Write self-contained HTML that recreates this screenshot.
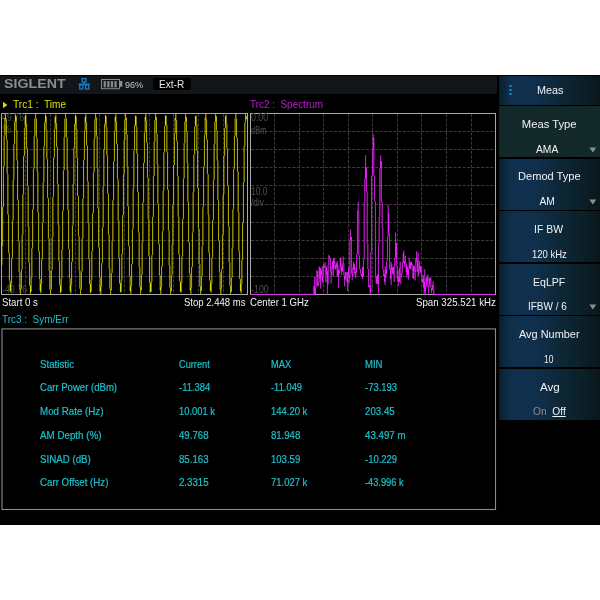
<!DOCTYPE html>
<html><head><meta charset="utf-8"><style>
html,body{margin:0;padding:0;}
body{width:600px;height:600px;background:#fff;position:relative;overflow:hidden;font-family:"Liberation Sans", sans-serif;}
.t{position:absolute;white-space:pre;}
</style></head><body>
<div style="position:absolute;left:0px;top:75px;width:600px;height:450px;background:#000"></div>
<div style="position:absolute;left:0px;top:76px;width:497px;height:18px;background:#121519"></div>
<svg style="position:absolute;left:0;top:70px;will-change:transform" width="80" height="25"><text x="4.1" y="18.3" font-family="Liberation Sans" font-weight="bold" font-size="12.9" fill="#8c8c8c" textLength="61.6" lengthAdjust="spacingAndGlyphs">SIGLENT</text></svg>
<svg style="position:absolute;left:78px;top:77px" width="13" height="14" viewBox="0 0 13 14">
<g fill="none" stroke="#127ec8" stroke-width="1.35">
<rect x="4.1" y="1.6" width="3.9" height="3.4"/>
<rect x="1.7" y="7.9" width="3.2" height="4.1"/>
<rect x="7.6" y="7.9" width="3.2" height="4.1"/>
<path d="M6.05 5V7.2M0.5 7.2H11.8"/>
</g></svg>
<svg style="position:absolute;left:100px;top:78px" width="24" height="12" viewBox="0 0 24 12">
<rect x="1.5" y="1.5" width="18" height="9.2" fill="none" stroke="#888" stroke-width="1"/>
<rect x="19.3" y="3" width="3" height="5.8" fill="#8e8e8e"/>
<rect x="3.6" y="3.1" width="2.3" height="6.3" fill="#858585"/>
<rect x="7.2" y="3.1" width="2.3" height="6.3" fill="#858585"/>
<rect x="10.8" y="3.1" width="2.3" height="6.3" fill="#858585"/>
<rect x="14.4" y="3.1" width="2.3" height="6.3" fill="#858585"/>
</svg>
<div class="t" style="left:125.00px;top:79.94px;font-size:9.4px;line-height:9.4px;color:#c4c4c4;font-weight:normal;transform:scaleX(0.9632);transform-origin:left 0;">96%</div>
<div style="position:absolute;left:153px;top:78px;width:38px;height:11.6px;background:#000"></div>
<div class="t" style="left:159.20px;top:79.06px;font-size:10.8px;line-height:10.8px;color:#e6e6e6;font-weight:normal;transform:scaleX(0.9333);transform-origin:left 0;">Ext-R</div>
<svg style="position:absolute;left:3px;top:101px" width="6" height="8" viewBox="0 0 6 8"><path d="M0 0.8L4.4 4L0 7.2Z" fill="#e2da00"/></svg>
<div class="t" style="left:13.30px;top:98.86px;font-size:10.8px;line-height:10.8px;color:#d8e000;font-weight:normal;transform:scaleX(0.9368);transform-origin:left 0;">Trc1 :&nbsp; Time</div>
<div class="t" style="left:250.20px;top:98.86px;font-size:10.8px;line-height:10.8px;color:#c418d8;font-weight:normal;transform:scaleX(0.9190);transform-origin:left 0;">Trc2 :&nbsp; Spectrum</div>
<svg style="position:absolute;left:0;top:0" width="600" height="600" viewBox="0 0 600 600"><path d="M2 131.5H247M251 131.5H495M2 149.5H247M251 149.5H495M2 167.5H247M251 167.5H495M2 185.5H247M251 185.5H495M2 204.5H247M251 204.5H495M2 222.5H247M251 222.5H495M2 240.5H247M251 240.5H495M2 258.5H247M251 258.5H495M2 276.5H247M251 276.5H495M274.5 114V294M299.5 114V294M323.5 114V294M348.5 114V294M372.5 114V294M397.5 114V294M421.5 114V294M446.5 114V294M471.5 114V294M25.5 114V294M50.5 114V294M75.5 114V294M99.5 114V294M124.5 114V294M149.5 114V294M173.5 114V294M198.5 114V294M223.5 114V294" stroke="#3a3c3a" stroke-width="1" stroke-dasharray="3.1 1.5" fill="none"/><g stroke="#a8a8a8" stroke-width="1" fill="none"><rect x="1.5" y="113.5" width="246" height="181"/><rect x="250.5" y="113.5" width="245" height="181"/></g></svg>
<div class="t" style="left:2.30px;top:113.49px;font-size:10.4px;line-height:10.4px;color:#4a4e4e;font-weight:normal;transform:scaleX(0.8538);transform-origin:left 0;">49.76</div>
<div class="t" style="left:2.30px;top:125.03px;font-size:10px;line-height:10px;color:#4a4e4e;font-weight:normal;">%</div>
<div class="t" style="left:2.30px;top:284.59px;font-size:10.4px;line-height:10.4px;color:#4a4e4e;font-weight:normal;transform:scaleX(0.8567);transform-origin:left 0;">-49.76</div>
<div class="t" style="left:251.30px;top:113.49px;font-size:10.4px;line-height:10.4px;color:#4a4e4e;font-weight:normal;transform:scaleX(0.8500);transform-origin:left 0;">0.00</div>
<div class="t" style="left:251.30px;top:126.13px;font-size:10px;line-height:10px;color:#4a4e4e;font-weight:normal;transform:scaleX(0.7619);transform-origin:left 0;">dBm</div>
<div class="t" style="left:251.30px;top:187.13px;font-size:10px;line-height:10px;color:#4a4e4e;font-weight:normal;transform:scaleX(0.8500);transform-origin:left 0;">10.0</div>
<div class="t" style="left:251.30px;top:197.53px;font-size:10px;line-height:10px;color:#4a4e4e;font-weight:normal;transform:scaleX(0.8313);transform-origin:left 0;">/div</div>
<div class="t" style="left:251.30px;top:284.59px;font-size:10.4px;line-height:10.4px;color:#4a4e4e;font-weight:normal;transform:scaleX(0.8571);transform-origin:left 0;">-100</div>
<svg style="position:absolute;left:0;top:0" width="600" height="600" viewBox="0 0 600 600"><path d="M1 245h1v1h-1zM2 166h1v40h-1zM3 208h1v38h-1zM5 136h1v4h-1zM6 113h1v6h-1zM8 253h1v28h-1zM9 214h1v38h-1zM11 220h1v37h-1zM12 259h1v25h-1zM13 143h1v1h-1zM14 114h1v7h-1zM15 113h1v1h-1zM15 131h1v13h-1zM17 201h1v40h-1zM18 160h1v40h-1zM18 272h1v1h-1zM20 269h1v3h-1zM21 234h1v1h-1zM21 289h1v6h-1zM23 128h1v27h-1zM24 157h1v37h-1zM26 114h1v1h-1zM26 149h1v37h-1zM27 124h1v24h-1zM28 185h1v1h-1zM29 286h1v8h-1zM30 262h1v15h-1zM30 294h1v1h-1zM32 169h1v40h-1zM33 135h1v1h-1zM33 210h1v38h-1zM35 136h1v2h-1zM36 113h1v5h-1zM37 137h1v1h-1zM38 171h1v1h-1zM38 252h1v27h-1zM39 212h1v39h-1zM40 278h1v1h-1zM41 223h1v36h-1zM41 293h1v1h-1zM42 260h1v24h-1zM44 114h1v8h-1zM44 182h1v1h-1zM45 113h1v1h-1zM45 130h1v16h-1zM46 159h1v1h-1zM47 129h1v1h-1zM47 199h1v40h-1zM48 159h1v38h-1zM51 290h1v5h-1zM52 270h1v1h-1zM53 129h1v28h-1zM54 158h1v39h-1zM55 129h1v1h-1zM56 114h1v1h-1zM56 148h1v36h-1zM57 123h1v23h-1zM58 261h1v1h-1zM59 286h1v7h-1zM60 261h1v17h-1zM62 170h1v40h-1zM63 211h1v39h-1zM65 137h1v1h-1zM66 113h1v5h-1zM66 170h1v1h-1zM67 210h1v1h-1zM68 250h1v28h-1zM69 210h1v38h-1zM71 225h1v36h-1zM71 293h1v1h-1zM72 183h1v1h-1zM72 262h1v23h-1zM73 225h1v1h-1zM74 115h1v8h-1zM75 130h1v18h-1zM77 196h1v40h-1zM78 157h1v38h-1zM81 290h1v5h-1zM83 130h1v29h-1zM84 160h1v39h-1zM85 113h1v1h-1zM86 146h1v36h-1zM87 122h1v23h-1zM89 222h1v1h-1zM89 285h1v8h-1zM90 259h1v20h-1zM92 172h1v40h-1zM93 138h1v1h-1zM93 214h1v37h-1zM96 113h1v4h-1zM98 248h1v30h-1zM99 208h1v39h-1zM100 294h1v1h-1zM101 227h1v36h-1zM102 264h1v23h-1zM104 115h1v8h-1zM105 128h1v21h-1zM107 194h1v41h-1zM108 155h1v38h-1zM111 240h1v1h-1zM111 291h1v4h-1zM112 273h1v1h-1zM113 131h1v30h-1zM114 162h1v38h-1zM115 113h1v1h-1zM116 145h1v34h-1zM117 121h1v22h-1zM118 258h1v1h-1zM119 284h1v9h-1zM120 258h1v22h-1zM122 174h1v41h-1zM123 216h1v38h-1zM124 119h1v1h-1zM124 174h1v1h-1zM125 140h1v1h-1zM126 113h1v4h-1zM128 247h1v29h-1zM129 206h1v39h-1zM130 275h1v1h-1zM130 294h1v1h-1zM131 229h1v34h-1zM132 265h1v22h-1zM134 115h1v10h-1zM134 188h1v1h-1zM135 127h1v24h-1zM137 126h1v1h-1zM137 193h1v40h-1zM138 154h1v37h-1zM140 294h1v1h-1zM141 291h1v3h-1zM143 132h1v30h-1zM143 242h1v1h-1zM144 163h1v40h-1zM145 113h1v1h-1zM145 132h1v1h-1zM146 143h1v35h-1zM147 121h1v21h-1zM149 283h1v10h-1zM150 256h1v25h-1zM151 254h1v1h-1zM152 176h1v40h-1zM153 141h1v1h-1zM153 217h1v38h-1zM154 119h1v1h-1zM156 113h1v3h-1zM156 164h1v1h-1zM157 204h1v1h-1zM158 244h1v31h-1zM159 204h1v39h-1zM159 290h1v1h-1zM160 294h1v1h-1zM161 231h1v35h-1zM162 267h1v20h-1zM163 231h1v1h-1zM164 115h1v10h-1zM165 127h1v25h-1zM167 190h1v41h-1zM168 152h1v37h-1zM169 230h1v1h-1zM170 294h1v1h-1zM171 292h1v2h-1zM173 133h1v31h-1zM174 117h1v1h-1zM174 166h1v39h-1zM176 142h1v34h-1zM177 120h1v20h-1zM179 216h1v1h-1zM179 282h1v10h-1zM180 254h1v27h-1zM182 178h1v40h-1zM183 220h1v37h-1zM185 113h1v1h-1zM185 143h1v1h-1zM186 114h1v2h-1zM187 131h1v1h-1zM188 162h1v1h-1zM188 243h1v31h-1zM189 202h1v40h-1zM189 290h1v1h-1zM190 294h1v1h-1zM191 232h1v34h-1zM192 268h1v20h-1zM194 116h1v10h-1zM195 127h1v28h-1zM197 189h1v40h-1zM198 151h1v37h-1zM200 294h1v1h-1zM201 292h1v2h-1zM202 206h1v1h-1zM203 135h1v31h-1zM204 117h1v1h-1zM204 167h1v40h-1zM205 135h1v1h-1zM206 140h1v34h-1zM207 119h1v20h-1zM208 173h1v1h-1zM209 281h1v10h-1zM210 253h1v27h-1zM211 257h1v1h-1zM212 180h1v40h-1zM213 221h1v37h-1zM214 180h1v1h-1zM215 113h1v1h-1zM216 114h1v2h-1zM218 241h1v31h-1zM219 200h1v40h-1zM221 235h1v34h-1zM222 270h1v19h-1zM223 155h1v1h-1zM224 116h1v12h-1zM224 194h1v1h-1zM225 114h1v1h-1zM225 129h1v27h-1zM227 123h1v1h-1zM227 187h1v40h-1zM228 148h1v37h-1zM230 294h1v1h-1zM231 292h1v2h-1zM233 136h1v32h-1zM233 248h1v1h-1zM234 169h1v40h-1zM236 139h1v33h-1zM237 118h1v19h-1zM237 212h1v1h-1zM239 280h1v11h-1zM240 251h1v27h-1zM240 293h1v1h-1zM242 182h1v40h-1zM242 284h1v1h-1zM243 223h1v37h-1zM245 113h1v1h-1zM245 146h1v1h-1zM246 114h1v2h-1zM246 120h1v2h-1z" fill="#e2da00" fill-opacity="0.083"/><path d="M2 206h1v1h-1zM3 207h1v1h-1zM4 117h1v1h-1zM5 135h1v1h-1zM11 257h1v1h-1zM11 292h1v1h-1zM12 258h1v1h-1zM17 130h1v1h-1zM19 240h1v1h-1zM22 269h1v1h-1zM23 155h1v1h-1zM24 156h1v1h-1zM25 114h1v1h-1zM25 128h1v1h-1zM27 226h1v1h-1zM29 226h1v1h-1zM32 277h1v1h-1zM37 212h1v1h-1zM40 293h1v1h-1zM47 198h1v1h-1zM48 197h1v1h-1zM50 270h1v1h-1zM55 114h1v1h-1zM56 147h1v1h-1zM57 146h1v1h-1zM58 183h1v1h-1zM59 285h1v1h-1zM60 278h1v1h-1zM60 293h1v1h-1zM61 249h1v1h-1zM64 170h1v1h-1zM68 249h1v1h-1zM69 248h1v1h-1zM70 293h1v1h-1zM73 147h1v1h-1zM75 114h1v1h-1zM75 129h1v1h-1zM81 238h1v1h-1zM82 198h1v1h-1zM83 238h1v1h-1zM90 279h1v1h-1zM90 293h1v1h-1zM92 212h1v1h-1zM93 213h1v1h-1zM97 135h1v1h-1zM103 227h1v1h-1zM105 114h1v1h-1zM106 155h1v1h-1zM107 127h1v1h-1zM108 268h1v1h-1zM109 234h1v1h-1zM110 268h1v1h-1zM115 131h1v1h-1zM116 144h1v1h-1zM117 143h1v1h-1zM117 220h1v1h-1zM119 220h1v1h-1zM122 280h1v1h-1zM126 166h1v1h-1zM127 206h1v1h-1zM128 166h1v1h-1zM128 246h1v1h-1zM129 245h1v1h-1zM131 263h1v1h-1zM132 264h1v1h-1zM133 150h1v1h-1zM137 192h1v1h-1zM138 191h1v1h-1zM139 287h1v1h-1zM148 177h1v1h-1zM150 281h1v1h-1zM154 176h1v1h-1zM156 116h1v1h-1zM162 190h1v1h-1zM164 125h1v1h-1zM164 190h1v1h-1zM165 126h1v1h-1zM166 152h1v1h-1zM168 265h1v1h-1zM169 287h1v1h-1zM170 265h1v1h-1zM171 244h1v1h-1zM171 291h1v1h-1zM172 204h1v1h-1zM172 275h1v1h-1zM173 164h1v1h-1zM173 244h1v1h-1zM174 165h1v1h-1zM176 141h1v1h-1zM177 140h1v1h-1zM178 254h1v1h-1zM180 292h1v1h-1zM182 218h1v1h-1zM183 219h1v1h-1zM186 116h1v1h-1zM190 273h1v1h-1zM191 266h1v1h-1zM192 267h1v1h-1zM195 115h1v1h-1zM197 124h1v1h-1zM199 228h1v1h-1zM201 291h1v1h-1zM207 214h1v1h-1zM209 214h1v1h-1zM210 292h1v1h-1zM212 283h1v1h-1zM216 160h1v1h-1zM217 200h1v1h-1zM218 160h1v1h-1zM219 289h1v1h-1zM226 114h1v1h-1zM227 186h1v1h-1zM228 185h1v1h-1zM228 262h1v1h-1zM230 262h1v1h-1zM234 118h1v1h-1zM236 138h1v1h-1zM237 137h1v1h-1zM238 171h1v1h-1zM238 251h1v1h-1zM239 279h1v1h-1zM240 278h1v1h-1zM241 293h1v1h-1zM244 182h1v1h-1z" fill="#e2da00" fill-opacity="0.167"/><path d="M2 264h1v1h-1zM3 135h1v1h-1zM4 166h1v1h-1zM6 173h1v1h-1zM7 139h1v1h-1zM7 214h1v1h-1zM8 174h1v1h-1zM9 252h1v1h-1zM9 290h1v1h-1zM10 280h1v1h-1zM10 292h1v1h-1zM12 180h1v1h-1zM13 220h1v1h-1zM14 179h1v1h-1zM15 130h1v1h-1zM16 160h1v1h-1zM17 200h1v1h-1zM19 289h1v1h-1zM23 234h1v1h-1zM24 116h1v1h-1zM28 262h1v1h-1zM30 277h1v1h-1zM33 209h1v1h-1zM34 118h1v1h-1zM36 171h1v1h-1zM38 251h1v1h-1zM39 290h1v1h-1zM42 182h1v1h-1zM48 270h1v1h-1zM49 238h1v1h-1zM49 289h1v1h-1zM51 237h1v1h-1zM52 196h1v1h-1zM53 236h1v1h-1zM54 117h1v1h-1zM57 224h1v1h-1zM59 225h1v1h-1zM62 210h1v1h-1zM62 278h1v1h-1zM63 137h1v1h-1zM64 118h1v1h-1zM68 170h1v1h-1zM69 290h1v1h-1zM71 261h1v1h-1zM74 123h1v1h-1zM74 183h1v1h-1zM76 157h1v1h-1zM77 129h1v1h-1zM78 195h1v1h-1zM78 269h1v1h-1zM80 270h1v1h-1zM82 271h1v1h-1zM83 159h1v1h-1zM84 117h1v1h-1zM85 130h1v1h-1zM86 114h1v1h-1zM87 222h1v1h-1zM88 181h1v1h-1zM88 259h1v1h-1zM89 284h1v1h-1zM92 279h1v1h-1zM94 172h1v1h-1zM95 138h1v1h-1zM96 167h1v1h-1zM97 208h1v1h-1zM98 168h1v1h-1zM99 290h1v1h-1zM100 277h1v1h-1zM101 293h1v1h-1zM102 186h1v1h-1zM102 263h1v1h-1zM104 123h1v1h-1zM104 185h1v1h-1zM105 127h1v1h-1zM113 240h1v1h-1zM114 117h1v1h-1zM114 161h1v1h-1zM116 114h1v1h-1zM120 280h1v1h-1zM121 253h1v1h-1zM123 140h1v1h-1zM123 215h1v1h-1zM129 290h1v1h-1zM131 293h1v1h-1zM132 188h1v1h-1zM138 266h1v1h-1zM139 232h1v1h-1zM140 267h1v1h-1zM141 242h1v1h-1zM142 202h1v1h-1zM142 274h1v1h-1zM143 162h1v1h-1zM144 117h1v1h-1zM146 114h1v1h-1zM147 218h1v1h-1zM148 256h1v1h-1zM149 219h1v1h-1zM152 216h1v1h-1zM152 281h1v1h-1zM155 141h1v1h-1zM157 133h1v1h-1zM158 164h1v1h-1zM159 243h1v1h-1zM161 293h1v1h-1zM162 266h1v1h-1zM166 115h1v1h-1zM167 125h1v1h-1zM168 189h1v1h-1zM175 133h1v1h-1zM176 113h1v1h-1zM177 216h1v1h-1zM179 281h1v1h-1zM181 256h1v1h-1zM181 292h1v1h-1zM182 282h1v1h-1zM183 143h1v1h-1zM184 121h1v1h-1zM184 178h1v1h-1zM186 162h1v1h-1zM188 242h1v1h-1zM191 293h1v1h-1zM192 192h1v1h-1zM193 154h1v1h-1zM193 232h1v1h-1zM194 126h1v1h-1zM194 191h1v1h-1zM196 115h1v1h-1zM197 188h1v1h-1zM198 263h1v1h-1zM199 286h1v1h-1zM200 264h1v1h-1zM201 246h1v1h-1zM203 245h1v1h-1zM206 113h1v1h-1zM211 292h1v1h-1zM213 144h1v1h-1zM214 121h1v1h-1zM215 143h1v1h-1zM217 130h1v1h-1zM219 240h1v1h-1zM221 294h1v1h-1zM222 194h1v1h-1zM222 269h1v1h-1zM225 128h1v1h-1zM226 148h1v1h-1zM229 226h1v1h-1zM231 248h1v1h-1zM232 277h1v1h-1zM233 168h1v1h-1zM236 113h1v1h-1zM239 212h1v1h-1zM241 259h1v1h-1zM242 222h1v1h-1zM243 146h1v1h-1z" fill="#e2da00" fill-opacity="0.250"/><path d="M2 246h1v18h-1zM3 136h1v30h-1zM6 140h1v33h-1zM8 175h1v39h-1zM9 281h1v9h-1zM11 284h1v8h-1zM12 181h1v39h-1zM14 144h1v35h-1zM17 131h1v29h-1zM18 241h1v31h-1zM20 272h1v1h-1zM21 235h1v34h-1zM23 195h1v39h-1zM24 117h1v11h-1zM26 115h1v8h-1zM27 186h1v40h-1zM29 227h1v35h-1zM32 249h1v28h-1zM33 136h1v32h-1zM35 135h1v1h-1zM36 138h1v33h-1zM38 172h1v40h-1zM39 279h1v11h-1zM41 285h1v8h-1zM42 183h1v39h-1zM44 147h1v35h-1zM45 129h1v1h-1zM47 130h1v29h-1zM48 239h1v31h-1zM51 238h1v32h-1zM53 197h1v39h-1zM54 118h1v11h-1zM56 115h1v8h-1zM57 184h1v40h-1zM59 226h1v35h-1zM62 250h1v28h-1zM63 138h1v32h-1zM66 138h1v32h-1zM68 171h1v39h-1zM69 279h1v11h-1zM71 285h1v8h-1zM72 184h1v41h-1zM74 148h1v35h-1zM77 130h1v27h-1zM78 237h1v32h-1zM80 271h1v1h-1zM81 239h1v32h-1zM83 199h1v39h-1zM84 118h1v12h-1zM86 115h1v7h-1zM87 182h1v40h-1zM89 223h1v36h-1zM92 252h1v27h-1zM93 139h1v33h-1zM95 136h1v2h-1zM96 117h1v1h-1zM96 136h1v31h-1zM98 169h1v39h-1zM99 278h1v12h-1zM101 287h1v6h-1zM102 187h1v40h-1zM104 150h1v35h-1zM107 128h1v27h-1zM108 235h1v33h-1zM110 269h1v4h-1zM111 241h1v32h-1zM111 290h1v1h-1zM113 201h1v39h-1zM114 118h1v13h-1zM116 115h1v6h-1zM117 180h1v40h-1zM119 221h1v37h-1zM120 292h1v1h-1zM122 254h1v26h-1zM123 141h1v33h-1zM125 134h1v6h-1zM126 117h1v1h-1zM126 135h1v31h-1zM128 167h1v39h-1zM129 276h1v14h-1zM131 287h1v6h-1zM132 189h1v39h-1zM134 151h1v37h-1zM135 115h1v1h-1zM135 126h1v1h-1zM137 127h1v26h-1zM138 233h1v33h-1zM140 268h1v7h-1zM141 243h1v31h-1zM141 290h1v1h-1zM143 203h1v39h-1zM144 118h1v14h-1zM146 115h1v5h-1zM147 178h1v40h-1zM149 220h1v36h-1zM150 292h1v1h-1zM152 255h1v26h-1zM153 142h1v34h-1zM155 133h1v8h-1zM156 134h1v30h-1zM158 165h1v39h-1zM159 276h1v14h-1zM161 288h1v5h-1zM162 191h1v40h-1zM164 153h1v37h-1zM167 126h1v26h-1zM168 231h1v34h-1zM170 266h1v9h-1zM171 245h1v30h-1zM173 205h1v39h-1zM174 118h1v15h-1zM176 114h1v6h-1zM177 177h1v39h-1zM179 217h1v37h-1zM182 257h1v25h-1zM183 144h1v34h-1zM185 132h1v11h-1zM186 132h1v30h-1zM188 163h1v38h-1zM189 274h1v16h-1zM191 288h1v5h-1zM192 193h1v39h-1zM194 155h1v36h-1zM197 125h1v25h-1zM198 229h1v34h-1zM200 265h1v12h-1zM201 247h1v29h-1zM203 207h1v38h-1zM204 118h1v17h-1zM206 114h1v5h-1zM207 174h1v40h-1zM209 215h1v37h-1zM212 258h1v25h-1zM213 145h1v35h-1zM215 130h1v13h-1zM216 131h1v29h-1zM218 161h1v39h-1zM219 273h1v16h-1zM221 289h1v5h-1zM222 195h1v39h-1zM224 156h1v38h-1zM225 115h1v1h-1zM227 124h1v24h-1zM228 227h1v35h-1zM230 263h1v15h-1zM231 249h1v28h-1zM233 210h1v38h-1zM234 119h1v16h-1zM236 114h1v4h-1zM237 172h1v40h-1zM239 213h1v38h-1zM240 292h1v1h-1zM242 260h1v24h-1zM243 147h1v35h-1zM245 123h1v23h-1zM246 119h1v1h-1z" fill="#e2da00" fill-opacity="0.333"/><path d="M1 264h1v1h-1zM5 120h1v15h-1zM14 121h1v1h-1zM15 122h1v8h-1zM16 116h1v1h-1zM20 273h1v15h-1zM22 194h1v1h-1zM23 194h1v1h-1zM26 123h1v1h-1zM26 148h1v1h-1zM27 148h1v1h-1zM30 278h1v7h-1zM31 248h1v1h-1zM31 291h1v1h-1zM32 248h1v1h-1zM33 168h1v1h-1zM34 168h1v1h-1zM35 119h1v16h-1zM36 118h1v1h-1zM41 259h1v1h-1zM41 284h1v1h-1zM42 222h1v1h-1zM42 259h1v1h-1zM43 146h1v1h-1zM43 222h1v1h-1zM44 146h1v1h-1zM45 123h1v6h-1zM46 116h1v1h-1zM50 271h1v18h-1zM51 289h1v1h-1zM53 157h1v1h-1zM54 157h1v1h-1zM60 279h1v5h-1zM61 291h1v1h-1zM65 119h1v18h-1zM66 118h1v1h-1zM66 137h1v1h-1zM67 137h1v1h-1zM69 278h1v1h-1zM70 278h1v1h-1zM75 124h1v5h-1zM76 116h1v1h-1zM78 236h1v1h-1zM79 236h1v1h-1zM79 288h1v1h-1zM80 272h1v16h-1zM86 145h1v1h-1zM87 145h1v1h-1zM90 280h1v4h-1zM91 251h1v1h-1zM91 291h1v1h-1zM92 251h1v1h-1zM94 119h1v1h-1zM95 120h1v16h-1zM98 247h1v1h-1zM99 247h1v1h-1zM103 149h1v1h-1zM104 149h1v1h-1zM105 124h1v3h-1zM106 116h1v1h-1zM107 193h1v1h-1zM108 193h1v1h-1zM109 288h1v1h-1zM110 273h1v15h-1zM112 200h1v1h-1zM113 200h1v1h-1zM117 179h1v1h-1zM118 179h1v1h-1zM119 283h1v1h-1zM120 281h1v2h-1zM121 291h1v1h-1zM125 120h1v14h-1zM126 134h1v1h-1zM127 134h1v1h-1zM132 228h1v1h-1zM133 228h1v1h-1zM136 116h1v1h-1zM136 153h1v1h-1zM137 153h1v1h-1zM140 275h1v12h-1zM146 120h1v1h-1zM146 142h1v1h-1zM147 142h1v1h-1zM151 291h1v1h-1zM155 120h1v13h-1zM159 275h1v1h-1zM160 275h1v1h-1zM161 287h1v1h-1zM163 152h1v1h-1zM164 152h1v1h-1zM170 275h1v12h-1zM175 113h1v1h-1zM177 176h1v1h-1zM178 176h1v1h-1zM185 122h1v10h-1zM187 201h1v1h-1zM188 201h1v1h-1zM196 150h1v1h-1zM197 150h1v1h-1zM200 277h1v9h-1zM201 276h1v1h-1zM202 276h1v1h-1zM203 166h1v1h-1zM204 166h1v1h-1zM205 113h1v1h-1zM206 139h1v1h-1zM207 139h1v1h-1zM208 252h1v1h-1zM209 252h1v1h-1zM209 280h1v1h-1zM210 280h1v1h-1zM210 291h1v1h-1zM212 220h1v1h-1zM213 220h1v1h-1zM215 122h1v8h-1zM219 272h1v1h-1zM220 272h1v1h-1zM220 294h1v1h-1zM222 234h1v1h-1zM223 234h1v1h-1zM229 285h1v1h-1zM230 278h1v7h-1zM232 209h1v1h-1zM233 209h1v1h-1zM234 135h1v1h-1zM235 113h1v1h-1zM235 135h1v1h-1zM240 291h1v1h-1zM244 122h1v1h-1zM245 122h1v1h-1z" fill="#e2da00" fill-opacity="0.417"/><path d="M1 246h1v1h-1zM3 166h1v1h-1zM5 113h1v1h-1zM6 139h1v1h-1zM8 214h1v1h-1zM9 280h1v1h-1zM11 283h1v1h-1zM12 220h1v1h-1zM13 144h1v1h-1zM17 160h1v1h-1zM20 294h1v1h-1zM28 186h1v1h-1zM29 262h1v1h-1zM35 113h1v1h-1zM37 138h1v1h-1zM40 279h1v1h-1zM46 158h1v1h-1zM48 238h1v1h-1zM50 294h1v1h-1zM52 269h1v1h-1zM53 196h1v1h-1zM55 128h1v1h-1zM58 260h1v1h-1zM60 284h1v1h-1zM65 113h1v1h-1zM67 209h1v1h-1zM73 224h1v1h-1zM77 157h1v1h-1zM80 288h1v1h-1zM80 294h1v1h-1zM81 271h1v1h-1zM81 289h1v1h-1zM84 130h1v1h-1zM85 114h1v1h-1zM87 181h1v1h-1zM89 259h1v1h-1zM93 172h1v1h-1zM95 113h1v1h-1zM95 119h1v1h-1zM98 208h1v1h-1zM99 277h1v1h-1zM100 293h1v1h-1zM101 286h1v1h-1zM110 288h1v1h-1zM110 294h1v1h-1zM112 272h1v1h-1zM115 114h1v1h-1zM116 121h1v1h-1zM118 257h1v1h-1zM122 253h1v1h-1zM124 120h1v1h-1zM124 173h1v1h-1zM125 113h1v1h-1zM130 276h1v1h-1zM130 293h1v1h-1zM131 286h1v1h-1zM138 232h1v1h-1zM141 274h1v1h-1zM143 202h1v1h-1zM145 114h1v1h-1zM145 131h1v1h-1zM149 256h1v1h-1zM151 255h1v1h-1zM154 120h1v1h-1zM155 113h1v1h-1zM156 133h1v1h-1zM157 203h1v1h-1zM160 293h1v1h-1zM163 230h1v1h-1zM165 115h1v1h-1zM169 231h1v1h-1zM174 133h1v1h-1zM182 256h1v1h-1zM183 178h1v1h-1zM187 132h1v1h-1zM190 293h1v1h-1zM192 232h1v1h-1zM194 154h1v1h-1zM202 207h1v1h-1zM205 134h1v1h-1zM208 174h1v1h-1zM211 258h1v1h-1zM214 179h1v1h-1zM216 130h1v1h-1zM223 156h1v1h-1zM227 148h1v1h-1zM228 226h1v1h-1zM230 285h1v1h-1zM231 277h1v1h-1zM236 118h1v1h-1zM242 259h1v1h-1z" fill="#e2da00" fill-opacity="0.500"/><path d="M1 247h1v17h-1zM4 118h1v48h-1zM5 119h1v1h-1zM6 119h1v1h-1zM7 140h1v74h-1zM8 252h1v1h-1zM10 281h1v2h-1zM13 145h1v75h-1zM16 117h1v43h-1zM18 200h1v1h-1zM18 240h1v1h-1zM19 241h1v48h-1zM20 288h1v1h-1zM21 269h1v1h-1zM21 288h1v1h-1zM22 195h1v74h-1zM24 128h1v1h-1zM25 115h1v1h-1zM25 124h1v4h-1zM28 187h1v75h-1zM29 285h1v1h-1zM30 285h1v1h-1zM31 249h1v42h-1zM32 209h1v1h-1zM34 119h1v49h-1zM35 118h1v1h-1zM37 139h1v73h-1zM38 212h1v1h-1zM39 251h1v1h-1zM40 280h1v4h-1zM40 292h1v1h-1zM43 147h1v75h-1zM44 122h1v1h-1zM45 122h1v1h-1zM46 117h1v41h-1zM49 239h1v50h-1zM50 289h1v1h-1zM52 197h1v72h-1zM55 115h1v1h-1zM55 124h1v4h-1zM57 183h1v1h-1zM58 184h1v76h-1zM61 250h1v41h-1zM62 249h1v1h-1zM63 170h1v1h-1zM63 210h1v1h-1zM64 119h1v51h-1zM65 118h1v1h-1zM67 138h1v71h-1zM70 279h1v5h-1zM70 292h1v1h-1zM72 261h1v1h-1zM73 148h1v76h-1zM74 147h1v1h-1zM76 117h1v40h-1zM77 195h1v1h-1zM79 237h1v51h-1zM82 199h1v72h-1zM83 198h1v1h-1zM84 159h1v1h-1zM85 115h1v1h-1zM85 123h1v7h-1zM86 122h1v1h-1zM88 182h1v77h-1zM91 252h1v39h-1zM94 120h1v52h-1zM96 135h1v1h-1zM97 136h1v72h-1zM100 278h1v8h-1zM100 292h1v1h-1zM101 263h1v1h-1zM102 227h1v1h-1zM103 150h1v77h-1zM106 117h1v38h-1zM107 155h1v1h-1zM108 234h1v1h-1zM109 235h1v53h-1zM112 201h1v71h-1zM113 161h1v1h-1zM114 131h1v1h-1zM115 115h1v1h-1zM115 122h1v9h-1zM118 180h1v77h-1zM121 254h1v37h-1zM122 215h1v1h-1zM124 121h1v52h-1zM127 135h1v71h-1zM128 206h1v1h-1zM130 277h1v9h-1zM130 292h1v1h-1zM133 151h1v77h-1zM134 125h1v1h-1zM134 150h1v1h-1zM135 125h1v1h-1zM136 117h1v36h-1zM139 233h1v54h-1zM142 203h1v71h-1zM144 162h1v1h-1zM145 115h1v1h-1zM145 121h1v10h-1zM147 177h1v1h-1zM148 178h1v78h-1zM149 282h1v1h-1zM150 282h1v1h-1zM151 256h1v35h-1zM153 176h1v1h-1zM153 216h1v1h-1zM154 121h1v55h-1zM157 134h1v69h-1zM158 243h1v1h-1zM160 276h1v11h-1zM160 291h1v2h-1zM161 266h1v1h-1zM163 153h1v77h-1zM166 116h1v36h-1zM167 152h1v1h-1zM167 189h1v1h-1zM169 232h1v55h-1zM171 275h1v1h-1zM172 205h1v70h-1zM173 204h1v1h-1zM175 114h1v3h-1zM175 121h1v12h-1zM178 177h1v77h-1zM179 254h1v1h-1zM180 281h1v1h-1zM181 257h1v35h-1zM184 122h1v56h-1zM187 133h1v68h-1zM189 242h1v1h-1zM189 273h1v1h-1zM190 274h1v13h-1zM190 291h1v2h-1zM193 155h1v77h-1zM195 126h1v1h-1zM196 116h1v34h-1zM198 188h1v1h-1zM198 228h1v1h-1zM199 229h1v57h-1zM202 208h1v68h-1zM205 114h1v3h-1zM205 120h1v14h-1zM206 119h1v1h-1zM208 175h1v77h-1zM211 259h1v33h-1zM214 122h1v57h-1zM217 131h1v69h-1zM218 200h1v1h-1zM218 240h1v1h-1zM220 273h1v15h-1zM220 290h1v4h-1zM221 269h1v1h-1zM221 288h1v1h-1zM223 157h1v77h-1zM224 128h1v1h-1zM226 115h1v33h-1zM229 227h1v58h-1zM232 210h1v67h-1zM234 168h1v1h-1zM235 114h1v21h-1zM237 171h1v1h-1zM238 172h1v79h-1zM239 251h1v1h-1zM241 260h1v33h-1zM243 182h1v1h-1zM243 222h1v1h-1zM244 123h1v59h-1z" fill="#e2da00" fill-opacity="0.583"/><path d="M2 207h1v1h-1zM2 245h1v1h-1zM3 206h1v1h-1zM10 291h1v1h-1zM11 258h1v1h-1zM12 257h1v1h-1zM14 143h1v1h-1zM15 114h1v1h-1zM23 156h1v1h-1zM24 155h1v1h-1zM27 185h1v1h-1zM30 293h1v1h-1zM36 137h1v1h-1zM39 278h1v1h-1zM40 291h1v1h-1zM45 114h1v1h-1zM47 159h1v1h-1zM47 197h1v1h-1zM48 198h1v1h-1zM51 270h1v1h-1zM54 129h1v1h-1zM55 116h1v1h-1zM55 123h1v1h-1zM56 123h1v1h-1zM56 146h1v1h-1zM57 147h1v1h-1zM59 261h1v1h-1zM59 284h1v1h-1zM68 210h1v1h-1zM68 248h1v1h-1zM69 249h1v1h-1zM70 284h1v1h-1zM70 291h1v1h-1zM71 284h1v1h-1zM72 225h1v1h-1zM85 116h1v1h-1zM92 213h1v1h-1zM93 212h1v1h-1zM100 291h1v1h-1zM111 273h1v1h-1zM115 116h1v1h-1zM116 143h1v1h-1zM117 144h1v1h-1zM119 258h1v1h-1zM123 174h1v1h-1zM128 245h1v1h-1zM129 246h1v1h-1zM129 275h1v1h-1zM130 291h1v1h-1zM131 264h1v1h-1zM132 263h1v1h-1zM137 191h1v1h-1zM138 192h1v1h-1zM140 293h1v1h-1zM144 132h1v1h-1zM145 116h1v1h-1zM152 254h1v1h-1zM158 204h1v1h-1zM162 231h1v1h-1zM164 126h1v1h-1zM168 230h1v1h-1zM170 293h1v1h-1zM173 165h1v1h-1zM174 164h1v1h-1zM175 120h1v1h-1zM176 120h1v1h-1zM176 140h1v1h-1zM177 141h1v1h-1zM182 219h1v1h-1zM183 218h1v1h-1zM185 114h1v1h-1zM185 121h1v1h-1zM186 131h1v1h-1zM190 287h1v1h-1zM191 267h1v1h-1zM191 287h1v1h-1zM192 266h1v1h-1zM200 286h1v1h-1zM200 293h1v1h-1zM203 206h1v1h-1zM204 135h1v1h-1zM207 173h1v1h-1zM212 257h1v1h-1zM213 180h1v1h-1zM215 114h1v1h-1zM215 121h1v1h-1zM216 116h1v1h-1zM224 155h1v1h-1zM227 185h1v1h-1zM228 186h1v1h-1zM230 293h1v1h-1zM231 291h1v1h-1zM236 137h1v1h-1zM237 138h1v1h-1zM239 278h1v1h-1zM240 279h1v1h-1zM245 114h1v1h-1zM246 116h1v1h-1z" fill="#e2da00" fill-opacity="0.667"/><path d="M2 208h1v37h-1zM3 167h1v39h-1zM5 114h1v3h-1zM6 120h1v19h-1zM8 215h1v37h-1zM9 253h1v27h-1zM11 259h1v24h-1zM12 221h1v36h-1zM14 122h1v21h-1zM15 115h1v1h-1zM15 121h1v1h-1zM17 161h1v39h-1zM18 201h1v39h-1zM20 290h1v4h-1zM21 270h1v18h-1zM23 157h1v37h-1zM24 129h1v26h-1zM26 124h1v24h-1zM27 149h1v36h-1zM29 263h1v22h-1zM30 292h1v1h-1zM32 210h1v38h-1zM33 169h1v40h-1zM35 114h1v4h-1zM36 119h1v18h-1zM38 213h1v38h-1zM39 252h1v26h-1zM41 260h1v24h-1zM42 223h1v36h-1zM44 123h1v23h-1zM45 115h1v1h-1zM47 160h1v37h-1zM48 199h1v39h-1zM50 290h1v4h-1zM51 271h1v18h-1zM53 158h1v38h-1zM54 130h1v27h-1zM56 124h1v22h-1zM57 148h1v35h-1zM59 262h1v22h-1zM60 292h1v1h-1zM62 211h1v38h-1zM63 171h1v39h-1zM65 114h1v4h-1zM66 119h1v18h-1zM68 211h1v37h-1zM69 250h1v28h-1zM71 262h1v22h-1zM72 226h1v35h-1zM74 124h1v23h-1zM75 115h1v1h-1zM77 158h1v37h-1zM78 196h1v40h-1zM80 289h1v5h-1zM81 272h1v17h-1zM83 160h1v38h-1zM84 131h1v28h-1zM85 122h1v1h-1zM86 123h1v22h-1zM87 146h1v35h-1zM89 260h1v24h-1zM90 292h1v1h-1zM92 214h1v37h-1zM93 173h1v39h-1zM95 114h1v4h-1zM96 119h1v16h-1zM98 209h1v38h-1zM99 248h1v29h-1zM101 264h1v22h-1zM102 228h1v35h-1zM104 124h1v25h-1zM105 115h1v1h-1zM107 156h1v37h-1zM108 194h1v40h-1zM110 290h1v4h-1zM111 274h1v15h-1zM113 162h1v38h-1zM114 132h1v29h-1zM116 122h1v21h-1zM117 145h1v34h-1zM119 259h1v24h-1zM120 283h1v1h-1zM122 216h1v37h-1zM123 175h1v40h-1zM125 114h1v4h-1zM126 120h1v14h-1zM128 207h1v38h-1zM129 247h1v28h-1zM131 265h1v21h-1zM132 229h1v34h-1zM134 126h1v24h-1zM137 154h1v37h-1zM138 193h1v39h-1zM140 287h1v1h-1zM140 290h1v3h-1zM141 275h1v12h-1zM143 163h1v39h-1zM144 133h1v29h-1zM146 121h1v21h-1zM147 143h1v34h-1zM149 257h1v25h-1zM152 217h1v37h-1zM153 177h1v39h-1zM155 114h1v3h-1zM156 117h1v1h-1zM156 120h1v13h-1zM158 205h1v38h-1zM159 244h1v31h-1zM160 290h1v1h-1zM161 267h1v20h-1zM162 232h1v34h-1zM164 127h1v25h-1zM165 125h1v1h-1zM167 153h1v36h-1zM168 190h1v40h-1zM170 287h1v1h-1zM170 291h1v2h-1zM171 276h1v11h-1zM171 290h1v1h-1zM173 166h1v38h-1zM174 134h1v30h-1zM175 117h1v1h-1zM176 121h1v19h-1zM177 142h1v34h-1zM179 255h1v26h-1zM182 220h1v36h-1zM183 179h1v39h-1zM185 115h1v2h-1zM186 117h1v1h-1zM186 121h1v10h-1zM188 202h1v40h-1zM189 243h1v30h-1zM190 290h1v1h-1zM191 268h1v19h-1zM192 233h1v33h-1zM194 127h1v27h-1zM195 125h1v1h-1zM197 151h1v37h-1zM198 189h1v39h-1zM200 291h1v2h-1zM201 277h1v10h-1zM201 290h1v1h-1zM203 167h1v39h-1zM204 136h1v30h-1zM205 117h1v1h-1zM205 119h1v1h-1zM206 120h1v19h-1zM207 140h1v33h-1zM209 253h1v27h-1zM210 281h1v2h-1zM212 221h1v36h-1zM213 181h1v39h-1zM215 115h1v1h-1zM216 121h1v9h-1zM218 201h1v39h-1zM219 241h1v31h-1zM220 288h1v1h-1zM221 270h1v18h-1zM222 235h1v34h-1zM224 129h1v26h-1zM225 124h1v4h-1zM227 149h1v36h-1zM228 187h1v39h-1zM230 292h1v1h-1zM231 278h1v8h-1zM233 169h1v40h-1zM234 136h1v32h-1zM236 119h1v18h-1zM237 139h1v32h-1zM239 252h1v26h-1zM240 280h1v4h-1zM242 223h1v36h-1zM243 183h1v39h-1zM245 115h1v1h-1zM245 119h1v3h-1z" fill="#e2da00" fill-opacity="0.750"/><path d="M5 117h1v1h-1zM10 283h1v1h-1zM75 123h1v1h-1zM90 284h1v1h-1zM95 118h1v1h-1zM96 118h1v1h-1zM100 286h1v1h-1zM105 123h1v1h-1zM110 289h1v1h-1zM111 289h1v1h-1zM115 121h1v1h-1zM125 118h1v2h-1zM126 118h1v2h-1zM130 286h1v1h-1zM140 288h1v2h-1zM141 287h1v3h-1zM155 117h1v3h-1zM156 118h1v2h-1zM170 288h1v3h-1zM171 287h1v3h-1zM180 282h1v1h-1zM180 291h1v1h-1zM185 117h1v4h-1zM186 118h1v3h-1zM195 116h1v1h-1zM200 287h1v4h-1zM201 287h1v3h-1zM215 116h1v5h-1zM216 117h1v4h-1zM220 289h1v1h-1zM225 116h1v1h-1zM230 286h1v6h-1zM231 286h1v5h-1zM245 116h1v3h-1zM246 117h1v2h-1z" fill="#e2da00" fill-opacity="0.833"/><path d="M20 289h1v1h-1zM195 124h1v1h-1zM210 283h1v1h-1z" fill="#e2da00" fill-opacity="0.917"/><path d="M5 118h1v1h-1zM10 284h1v7h-1zM15 116h1v5h-1zM25 116h1v8h-1zM30 286h1v6h-1zM40 284h1v7h-1zM45 116h1v6h-1zM55 117h1v6h-1zM60 285h1v7h-1zM70 285h1v6h-1zM75 116h1v7h-1zM85 117h1v5h-1zM90 285h1v7h-1zM100 287h1v4h-1zM105 116h1v7h-1zM115 117h1v4h-1zM120 284h1v8h-1zM130 287h1v4h-1zM135 116h1v9h-1zM145 117h1v4h-1zM150 283h1v9h-1zM160 287h1v3h-1zM165 116h1v9h-1zM175 118h1v2h-1zM180 283h1v8h-1zM190 288h1v2h-1zM195 117h1v7h-1zM205 118h1v1h-1zM210 284h1v7h-1zM225 117h1v7h-1zM240 284h1v7h-1z" fill="#e2da00" fill-opacity="1.000"/><path d="M250 293h1v1h-1zM251 293h1v1h-1zM252 293h1v1h-1zM253 293h1v1h-1zM254 293h1v1h-1zM255 293h1v1h-1zM256 293h1v1h-1zM257 293h1v1h-1zM258 293h1v1h-1zM259 293h1v1h-1zM260 293h1v1h-1zM261 293h1v1h-1zM262 293h1v1h-1zM263 293h1v1h-1zM264 293h1v1h-1zM265 293h1v1h-1zM266 293h1v1h-1zM267 293h1v1h-1zM268 293h1v1h-1zM269 293h1v1h-1zM270 293h1v1h-1zM271 293h1v1h-1zM272 293h1v1h-1zM273 293h1v1h-1zM274 293h1v1h-1zM275 293h1v1h-1zM276 293h1v1h-1zM277 293h1v1h-1zM278 293h1v1h-1zM279 293h1v1h-1zM280 293h1v1h-1zM281 293h1v1h-1zM282 293h1v1h-1zM283 293h1v1h-1zM284 293h1v1h-1zM285 293h1v1h-1zM286 293h1v1h-1zM287 293h1v1h-1zM288 293h1v1h-1zM289 293h1v1h-1zM290 293h1v1h-1zM291 293h1v1h-1zM292 293h1v1h-1zM293 293h1v1h-1zM294 293h1v1h-1zM295 293h1v1h-1zM296 293h1v1h-1zM297 293h1v1h-1zM298 293h1v1h-1zM299 293h1v1h-1zM300 293h1v1h-1zM301 293h1v1h-1zM302 293h1v1h-1zM303 293h1v1h-1zM304 293h1v1h-1zM305 293h1v1h-1zM306 293h1v1h-1zM307 293h1v1h-1zM308 293h1v1h-1zM309 293h1v1h-1zM310 293h1v1h-1zM311 293h1v1h-1zM312 293h1v1h-1zM316 269h1v1h-1zM316 288h1v1h-1zM320 267h1v1h-1zM321 281h1v8h-1zM323 263h1v1h-1zM324 268h1v8h-1zM325 282h1v1h-1zM326 283h1v12h-1zM327 264h1v1h-1zM328 254h1v1h-1zM329 265h1v7h-1zM330 256h1v2h-1zM332 258h1v2h-1zM332 276h1v1h-1zM333 257h1v1h-1zM334 257h1v1h-1zM335 261h1v1h-1zM337 260h1v1h-1zM338 264h1v1h-1zM338 288h1v1h-1zM339 258h1v1h-1zM339 274h1v14h-1zM342 272h1v3h-1zM345 280h1v7h-1zM346 282h1v1h-1zM347 267h1v5h-1zM347 291h1v1h-1zM348 266h1v1h-1zM348 284h1v7h-1zM351 229h1v7h-1zM352 266h1v1h-1zM354 262h1v1h-1zM356 211h1v43h-1zM356 278h1v1h-1zM357 201h1v1h-1zM357 255h1v17h-1zM359 270h1v3h-1zM360 256h1v13h-1zM361 272h1v1h-1zM362 259h1v7h-1zM362 279h1v1h-1zM363 277h1v2h-1zM366 155h1v12h-1zM368 243h1v1h-1zM369 269h1v15h-1zM370 294h1v1h-1zM371 149h1v26h-1zM372 176h1v77h-1zM374 202h1v76h-1zM375 175h1v25h-1zM376 275h1v1h-1zM377 244h1v30h-1zM377 285h1v10h-1zM378 216h1v1h-1zM379 167h1v1h-1zM381 155h1v6h-1zM382 270h1v1h-1zM383 277h1v5h-1zM385 285h1v1h-1zM386 236h1v24h-1zM387 204h1v1h-1zM387 262h1v12h-1zM389 270h1v9h-1zM390 233h1v28h-1zM391 285h1v1h-1zM392 264h1v1h-1zM392 274h1v1h-1zM393 266h1v1h-1zM394 282h1v1h-1zM396 232h1v10h-1zM396 278h1v1h-1zM398 268h1v2h-1zM399 261h1v1h-1zM399 283h1v3h-1zM401 262h1v10h-1zM401 284h1v1h-1zM402 274h1v3h-1zM404 267h1v1h-1zM405 272h1v1h-1zM407 264h1v1h-1zM407 278h1v2h-1zM409 257h1v1h-1zM412 263h1v1h-1zM413 279h1v1h-1zM414 265h1v1h-1zM415 257h1v1h-1zM417 251h1v1h-1zM418 276h1v1h-1zM419 260h1v1h-1zM420 261h1v5h-1zM422 283h1v4h-1zM426 287h1v8h-1zM429 287h1v8h-1zM430 288h1v1h-1zM432 291h1v2h-1zM435 293h1v1h-1zM436 293h1v1h-1zM437 293h1v1h-1zM438 293h1v1h-1zM439 293h1v1h-1zM440 293h1v1h-1zM441 293h1v1h-1zM442 293h1v1h-1zM443 293h1v1h-1zM444 293h1v1h-1zM445 293h1v1h-1zM446 293h1v1h-1zM447 293h1v1h-1zM448 293h1v1h-1zM449 293h1v1h-1zM450 293h1v1h-1zM451 293h1v1h-1zM452 293h1v1h-1zM453 293h1v1h-1zM454 293h1v1h-1zM455 293h1v1h-1zM456 293h1v1h-1zM457 293h1v1h-1zM458 293h1v1h-1zM459 293h1v1h-1zM460 293h1v1h-1zM461 293h1v1h-1zM462 293h1v1h-1zM463 293h1v1h-1zM464 293h1v1h-1zM465 293h1v1h-1zM466 293h1v1h-1zM467 293h1v1h-1zM468 293h1v1h-1zM469 293h1v1h-1zM470 293h1v1h-1zM471 293h1v1h-1zM472 293h1v1h-1zM473 293h1v1h-1zM474 293h1v1h-1zM475 293h1v1h-1zM476 293h1v1h-1zM477 293h1v1h-1zM478 293h1v1h-1zM479 293h1v1h-1zM480 293h1v1h-1zM481 293h1v1h-1zM482 293h1v1h-1zM483 293h1v1h-1zM484 293h1v1h-1zM485 293h1v1h-1zM486 293h1v1h-1zM487 293h1v1h-1zM488 293h1v1h-1zM489 293h1v1h-1zM490 293h1v1h-1zM491 293h1v1h-1zM492 293h1v1h-1zM493 293h1v1h-1zM494 293h1v1h-1zM495 293h1v1h-1z" fill="#e41ef4" fill-opacity="0.083"/><path d="M313 285h1v1h-1zM315 276h1v1h-1zM323 283h1v1h-1zM324 262h1v1h-1zM326 265h1v1h-1zM326 282h1v1h-1zM328 284h1v1h-1zM330 283h1v1h-1zM332 260h1v1h-1zM334 269h1v1h-1zM342 256h1v1h-1zM343 275h1v1h-1zM349 240h1v1h-1zM350 277h1v1h-1zM351 236h1v1h-1zM351 280h1v1h-1zM354 263h1v1h-1zM355 267h1v1h-1zM355 278h1v1h-1zM358 201h1v1h-1zM359 211h1v1h-1zM362 266h1v1h-1zM363 202h1v1h-1zM365 202h1v1h-1zM367 269h1v1h-1zM369 284h1v1h-1zM370 252h1v1h-1zM371 292h1v1h-1zM374 201h1v1h-1zM375 200h1v1h-1zM375 283h1v1h-1zM382 201h1v1h-1zM383 276h1v1h-1zM386 260h1v1h-1zM386 277h1v1h-1zM387 261h1v1h-1zM388 204h1v1h-1zM388 236h1v1h-1zM391 261h1v1h-1zM396 242h1v1h-1zM399 282h1v1h-1zM400 261h1v1h-1zM400 284h1v1h-1zM402 253h1v1h-1zM402 273h1v1h-1zM403 263h1v1h-1zM404 250h1v1h-1zM409 269h1v1h-1zM412 278h1v1h-1zM414 280h1v1h-1zM418 252h1v1h-1zM419 274h1v1h-1zM421 281h1v1h-1zM427 287h1v1h-1zM428 274h1v1h-1zM431 277h1v1h-1zM434 289h1v1h-1z" fill="#e41ef4" fill-opacity="0.167"/><path d="M314 276h1v1h-1zM318 266h1v1h-1zM321 266h1v1h-1zM332 275h1v1h-1zM336 276h1v1h-1zM341 257h1v1h-1zM341 275h1v1h-1zM344 263h1v1h-1zM353 261h1v1h-1zM366 243h1v1h-1zM368 287h1v1h-1zM372 134h1v1h-1zM380 216h1v1h-1zM384 266h1v1h-1zM390 261h1v1h-1zM398 270h1v1h-1zM401 272h1v1h-1zM405 255h1v1h-1zM410 261h1v1h-1zM410 269h1v1h-1zM411 261h1v1h-1zM411 270h1v1h-1zM416 271h1v1h-1zM417 252h1v1h-1zM423 294h1v1h-1zM425 269h1v1h-1zM431 293h1v1h-1zM432 281h1v1h-1z" fill="#e41ef4" fill-opacity="0.250"/><path d="M317 270h1v1h-1zM318 267h1v4h-1zM321 267h1v1h-1zM321 280h1v1h-1zM322 283h1v1h-1zM323 277h1v6h-1zM325 262h1v1h-1zM327 265h1v1h-1zM329 255h1v1h-1zM330 258h1v1h-1zM330 273h1v10h-1zM331 283h1v1h-1zM335 262h1v1h-1zM335 269h1v1h-1zM336 261h1v2h-1zM336 270h1v6h-1zM338 265h1v4h-1zM339 259h1v10h-1zM341 258h1v5h-1zM342 257h1v6h-1zM343 256h1v1h-1zM344 264h1v8h-1zM348 283h1v1h-1zM349 283h1v1h-1zM350 274h1v3h-1zM351 274h1v6h-1zM352 280h1v1h-1zM353 274h1v2h-1zM354 274h1v2h-1zM356 273h1v5h-1zM357 202h1v8h-1zM357 254h1v1h-1zM359 212h1v43h-1zM359 269h1v1h-1zM360 274h1v2h-1zM363 203h1v56h-1zM364 178h1v1h-1zM364 259h1v1h-1zM365 192h1v10h-1zM366 192h1v51h-1zM368 244h1v25h-1zM369 288h1v6h-1zM371 253h1v39h-1zM372 135h1v14h-1zM373 175h1v1h-1zM374 138h1v37h-1zM375 278h1v5h-1zM377 284h1v1h-1zM378 217h1v26h-1zM380 202h1v14h-1zM381 202h1v26h-1zM383 228h1v41h-1zM384 267h1v2h-1zM384 283h1v2h-1zM386 274h1v3h-1zM387 205h1v31h-1zM389 213h1v20h-1zM389 269h1v1h-1zM390 280h1v5h-1zM392 265h1v1h-1zM393 275h1v7h-1zM395 266h1v1h-1zM396 266h1v12h-1zM397 265h1v1h-1zM397 280h1v1h-1zM399 262h1v6h-1zM401 277h1v7h-1zM402 254h1v8h-1zM403 250h1v1h-1zM404 251h1v4h-1zM405 268h1v4h-1zM406 262h1v1h-1zM406 277h1v1h-1zM407 265h1v1h-1zM407 277h1v1h-1zM408 258h1v8h-1zM415 280h1v1h-1zM417 272h1v4h-1zM419 273h1v1h-1zM422 273h1v2h-1zM423 288h1v6h-1zM425 270h1v7h-1zM427 274h1v1h-1zM428 275h1v2h-1zM430 277h1v1h-1zM431 278h1v6h-1zM432 282h1v2h-1zM432 290h1v1h-1zM434 290h1v3h-1z" fill="#e41ef4" fill-opacity="0.333"/><path d="M250 294h1v1h-1zM318 271h1v1h-1zM321 268h1v1h-1zM323 276h1v1h-1zM324 263h1v1h-1zM326 266h1v1h-1zM327 266h1v1h-1zM329 264h1v1h-1zM336 269h1v1h-1zM338 269h1v1h-1zM339 269h1v1h-1zM341 263h1v1h-1zM342 263h1v1h-1zM344 286h1v1h-1zM350 229h1v1h-1zM353 273h1v1h-1zM354 273h1v1h-1zM360 273h1v1h-1zM365 191h1v1h-1zM383 269h1v1h-1zM384 269h1v1h-1zM384 282h1v1h-1zM390 279h1v1h-1zM392 266h1v1h-1zM395 232h1v1h-1zM395 265h1v1h-1zM404 255h1v1h-1zM405 267h1v1h-1zM407 266h1v1h-1zM408 266h1v1h-1zM411 269h1v1h-1zM413 265h1v1h-1zM414 279h1v1h-1zM419 272h1v1h-1zM425 277h1v1h-1zM428 277h1v1h-1zM429 277h1v1h-1zM431 284h1v1h-1zM432 284h1v1h-1z" fill="#e41ef4" fill-opacity="0.417"/><path d="M315 277h1v11h-1zM318 272h1v10h-1zM319 266h1v1h-1zM319 282h1v1h-1zM321 269h1v1h-1zM321 275h1v5h-1zM322 266h1v1h-1zM324 264h1v1h-1zM326 275h1v7h-1zM327 267h1v4h-1zM329 259h1v5h-1zM330 272h1v1h-1zM331 266h1v1h-1zM332 269h1v6h-1zM335 263h1v2h-1zM336 268h1v1h-1zM340 257h1v1h-1zM340 270h1v1h-1zM341 264h1v2h-1zM344 272h1v3h-1zM348 276h1v7h-1zM350 241h1v33h-1zM353 270h1v3h-1zM358 255h1v1h-1zM359 255h1v1h-1zM365 179h1v12h-1zM366 191h1v1h-1zM367 191h1v1h-1zM369 287h1v1h-1zM371 175h1v1h-1zM372 175h1v1h-1zM373 134h1v1h-1zM378 243h1v1h-1zM379 243h1v1h-1zM380 168h1v34h-1zM384 270h1v4h-1zM385 266h1v1h-1zM390 262h1v7h-1zM394 257h1v1h-1zM395 258h1v7h-1zM398 271h1v6h-1zM404 256h1v5h-1zM405 263h1v4h-1zM407 275h1v2h-1zM408 267h1v2h-1zM411 266h1v3h-1zM414 271h1v8h-1zM416 262h1v9h-1zM417 253h1v7h-1zM419 271h1v1h-1zM421 266h1v1h-1zM422 275h1v3h-1zM424 269h1v1h-1zM424 294h1v1h-1zM425 278h1v8h-1zM426 286h1v1h-1zM428 278h1v8h-1zM429 286h1v1h-1zM431 285h1v3h-1zM433 281h1v1h-1zM433 294h1v1h-1zM434 293h1v1h-1z" fill="#e41ef4" fill-opacity="0.500"/><path d="M316 270h1v1h-1zM316 287h1v1h-1zM318 282h1v1h-1zM320 288h1v1h-1zM325 281h1v1h-1zM327 294h1v1h-1zM328 255h1v1h-1zM333 276h1v1h-1zM334 258h1v1h-1zM336 267h1v1h-1zM337 261h1v1h-1zM337 276h1v1h-1zM339 270h1v1h-1zM342 271h1v1h-1zM346 272h1v1h-1zM346 281h1v1h-1zM348 275h1v1h-1zM352 267h1v1h-1zM356 272h1v1h-1zM357 210h1v1h-1zM361 273h1v1h-1zM361 276h1v1h-1zM363 259h1v1h-1zM365 155h1v1h-1zM370 293h1v1h-1zM374 175h1v1h-1zM375 277h1v1h-1zM376 276h1v1h-1zM377 274h1v1h-1zM378 294h1v1h-1zM379 168h1v1h-1zM380 155h1v1h-1zM382 269h1v1h-1zM385 284h1v1h-1zM391 284h1v1h-1zM394 281h1v1h-1zM395 257h1v1h-1zM396 265h1v1h-1zM398 285h1v1h-1zM402 262h1v1h-1zM408 279h1v1h-1zM409 258h1v1h-1zM412 264h1v1h-1zM415 258h1v1h-1zM416 251h1v1h-1zM416 261h1v1h-1zM417 260h1v1h-1zM418 275h1v1h-1zM420 272h1v1h-1zM422 278h1v1h-1zM423 275h1v1h-1zM423 287h1v1h-1zM425 294h1v1h-1zM426 277h1v1h-1zM428 294h1v1h-1zM430 287h1v1h-1zM495 294h1v1h-1z" fill="#e41ef4" fill-opacity="0.583"/><path d="M313 286h1v7h-1zM316 271h1v16h-1zM319 279h1v3h-1zM322 267h1v8h-1zM322 281h1v2h-1zM325 263h1v18h-1zM328 256h1v28h-1zM331 267h1v5h-1zM331 276h1v7h-1zM334 259h1v2h-1zM334 264h1v5h-1zM337 262h1v2h-1zM340 267h1v3h-1zM343 257h1v6h-1zM343 265h1v10h-1zM346 274h1v7h-1zM349 241h1v34h-1zM349 278h1v5h-1zM352 268h1v5h-1zM352 277h1v3h-1zM355 268h1v4h-1zM355 277h1v1h-1zM356 254h1v1h-1zM358 202h1v53h-1zM360 269h1v1h-1zM364 179h1v80h-1zM367 192h1v77h-1zM370 253h1v34h-1zM373 135h1v2h-1zM373 150h1v25h-1zM376 283h1v1h-1zM379 169h1v74h-1zM382 202h1v67h-1zM385 267h1v2h-1zM385 278h1v6h-1zM388 205h1v7h-1zM388 234h1v2h-1zM391 262h1v2h-1zM391 271h1v13h-1zM394 258h1v23h-1zM397 266h1v4h-1zM397 279h1v1h-1zM400 262h1v22h-1zM403 251h1v2h-1zM406 263h1v1h-1zM406 273h1v4h-1zM409 259h1v4h-1zM409 268h1v1h-1zM412 265h1v13h-1zM415 259h1v11h-1zM415 272h1v8h-1zM418 253h1v17h-1zM421 267h1v14h-1zM424 270h1v11h-1zM424 292h1v2h-1zM427 275h1v2h-1zM427 283h1v4h-1zM430 281h1v6h-1zM433 282h1v12h-1z" fill="#e41ef4" fill-opacity="0.667"/><path d="M313 293h1v1h-1zM315 294h1v1h-1zM317 285h1v1h-1zM318 285h1v1h-1zM321 270h1v1h-1zM322 275h1v1h-1zM323 264h1v1h-1zM324 265h1v1h-1zM324 267h1v1h-1zM338 287h1v1h-1zM339 273h1v1h-1zM343 264h1v1h-1zM345 279h1v1h-1zM347 272h1v1h-1zM347 290h1v1h-1zM348 267h1v1h-1zM351 273h1v1h-1zM352 276h1v1h-1zM353 269h1v1h-1zM355 276h1v1h-1zM362 278h1v1h-1zM363 276h1v1h-1zM365 178h1v1h-1zM366 167h1v1h-1zM368 269h1v1h-1zM371 252h1v1h-1zM372 149h1v1h-1zM373 137h1v1h-1zM374 200h1v1h-1zM375 201h1v1h-1zM381 161h1v1h-1zM381 201h1v1h-1zM385 269h1v1h-1zM386 261h1v1h-1zM387 236h1v1h-1zM387 260h1v1h-1zM388 212h1v1h-1zM389 233h1v1h-1zM391 270h1v1h-1zM392 267h1v1h-1zM392 273h1v1h-1zM402 272h1v1h-1zM404 261h1v1h-1zM404 266h1v1h-1zM405 262h1v1h-1zM414 266h1v1h-1zM419 261h1v1h-1zM422 282h1v1h-1zM424 281h1v1h-1zM424 291h1v1h-1zM427 282h1v1h-1zM430 278h1v1h-1z" fill="#e41ef4" fill-opacity="0.750"/><path d="M251 294h1v1h-1zM252 294h1v1h-1zM253 294h1v1h-1zM254 294h1v1h-1zM255 294h1v1h-1zM256 294h1v1h-1zM257 294h1v1h-1zM258 294h1v1h-1zM259 294h1v1h-1zM260 294h1v1h-1zM261 294h1v1h-1zM262 294h1v1h-1zM263 294h1v1h-1zM264 294h1v1h-1zM265 294h1v1h-1zM266 294h1v1h-1zM267 294h1v1h-1zM268 294h1v1h-1zM269 294h1v1h-1zM270 294h1v1h-1zM271 294h1v1h-1zM272 294h1v1h-1zM273 294h1v1h-1zM274 294h1v1h-1zM275 294h1v1h-1zM276 294h1v1h-1zM277 294h1v1h-1zM278 294h1v1h-1zM279 294h1v1h-1zM280 294h1v1h-1zM281 294h1v1h-1zM282 294h1v1h-1zM283 294h1v1h-1zM284 294h1v1h-1zM285 294h1v1h-1zM286 294h1v1h-1zM287 294h1v1h-1zM288 294h1v1h-1zM289 294h1v1h-1zM290 294h1v1h-1zM291 294h1v1h-1zM292 294h1v1h-1zM293 294h1v1h-1zM294 294h1v1h-1zM295 294h1v1h-1zM296 294h1v1h-1zM297 294h1v1h-1zM298 294h1v1h-1zM299 294h1v1h-1zM300 294h1v1h-1zM301 294h1v1h-1zM302 294h1v1h-1zM303 294h1v1h-1zM304 294h1v1h-1zM305 294h1v1h-1zM306 294h1v1h-1zM307 294h1v1h-1zM308 294h1v1h-1zM309 294h1v1h-1zM310 294h1v1h-1zM311 294h1v1h-1zM312 294h1v1h-1zM314 277h1v8h-1zM317 271h1v1h-1zM317 277h1v5h-1zM319 267h1v1h-1zM319 278h1v1h-1zM320 268h1v1h-1zM320 279h1v9h-1zM323 268h1v8h-1zM327 285h1v9h-1zM329 256h1v1h-1zM330 259h1v13h-1zM331 275h1v1h-1zM333 269h1v7h-1zM334 261h1v1h-1zM334 263h1v1h-1zM337 264h1v1h-1zM338 277h1v10h-1zM340 258h1v1h-1zM340 266h1v1h-1zM341 266h1v1h-1zM341 272h1v3h-1zM342 264h1v2h-1zM344 275h1v1h-1zM344 280h1v6h-1zM345 274h1v1h-1zM347 283h1v7h-1zM348 268h1v4h-1zM350 230h1v7h-1zM350 240h1v1h-1zM351 241h1v32h-1zM352 273h1v1h-1zM353 262h1v2h-1zM354 270h1v2h-1zM356 255h1v12h-1zM357 212h1v42h-1zM359 256h1v13h-1zM360 270h1v3h-1zM362 277h1v1h-1zM363 260h1v7h-1zM365 156h1v11h-1zM366 179h1v12h-1zM368 270h1v15h-1zM371 176h1v76h-1zM372 150h1v25h-1zM373 149h1v1h-1zM374 176h1v24h-1zM375 202h1v75h-1zM378 244h1v30h-1zM378 285h1v9h-1zM380 156h1v5h-1zM381 168h1v33h-1zM383 270h1v4h-1zM386 262h1v7h-1zM387 237h1v23h-1zM388 233h1v1h-1zM389 234h1v35h-1zM391 264h1v1h-1zM393 274h1v1h-1zM395 233h1v10h-1zM396 258h1v7h-1zM397 270h1v1h-1zM397 278h1v1h-1zM398 282h1v3h-1zM399 268h1v1h-1zM399 274h1v3h-1zM402 263h1v9h-1zM404 264h1v2h-1zM405 256h1v5h-1zM406 264h1v1h-1zM406 272h1v1h-1zM408 269h1v1h-1zM408 275h1v4h-1zM410 268h1v1h-1zM414 270h1v1h-1zM415 270h1v1h-1zM416 252h1v5h-1zM417 271h1v1h-1zM418 270h1v1h-1zM419 262h1v4h-1zM419 270h1v1h-1zM423 276h1v3h-1zM425 286h1v1h-1zM425 292h1v2h-1zM426 283h1v3h-1zM428 286h1v1h-1zM428 288h1v6h-1zM429 281h1v5h-1zM431 291h1v2h-1zM435 294h1v1h-1zM436 294h1v1h-1zM437 294h1v1h-1zM438 294h1v1h-1zM439 294h1v1h-1zM440 294h1v1h-1zM441 294h1v1h-1zM442 294h1v1h-1zM443 294h1v1h-1zM444 294h1v1h-1zM445 294h1v1h-1zM446 294h1v1h-1zM447 294h1v1h-1zM448 294h1v1h-1zM449 294h1v1h-1zM450 294h1v1h-1zM451 294h1v1h-1zM452 294h1v1h-1zM453 294h1v1h-1zM454 294h1v1h-1zM455 294h1v1h-1zM456 294h1v1h-1zM457 294h1v1h-1zM458 294h1v1h-1zM459 294h1v1h-1zM460 294h1v1h-1zM461 294h1v1h-1zM462 294h1v1h-1zM463 294h1v1h-1zM464 294h1v1h-1zM465 294h1v1h-1zM466 294h1v1h-1zM467 294h1v1h-1zM468 294h1v1h-1zM469 294h1v1h-1zM470 294h1v1h-1zM471 294h1v1h-1zM472 294h1v1h-1zM473 294h1v1h-1zM474 294h1v1h-1zM475 294h1v1h-1zM476 294h1v1h-1zM477 294h1v1h-1zM478 294h1v1h-1zM479 294h1v1h-1zM480 294h1v1h-1zM481 294h1v1h-1zM482 294h1v1h-1zM483 294h1v1h-1zM484 294h1v1h-1zM485 294h1v1h-1zM486 294h1v1h-1zM487 294h1v1h-1zM488 294h1v1h-1zM489 294h1v1h-1zM490 294h1v1h-1zM491 294h1v1h-1zM492 294h1v1h-1zM493 294h1v1h-1zM494 294h1v1h-1z" fill="#e41ef4" fill-opacity="0.833"/><path d="M313 294h1v1h-1zM314 285h1v1h-1zM315 288h1v1h-1zM317 282h1v1h-1zM320 278h1v1h-1zM321 274h1v1h-1zM323 265h1v1h-1zM323 267h1v1h-1zM326 274h1v1h-1zM327 271h1v1h-1zM327 284h1v1h-1zM332 261h1v1h-1zM332 268h1v1h-1zM333 268h1v1h-1zM335 265h1v1h-1zM338 276h1v1h-1zM341 271h1v1h-1zM342 266h1v1h-1zM344 279h1v1h-1zM345 272h1v1h-1zM345 275h1v1h-1zM347 282h1v1h-1zM348 272h1v1h-1zM351 237h1v1h-1zM351 240h1v1h-1zM354 264h1v1h-1zM354 269h1v1h-1zM356 267h1v1h-1zM362 267h1v1h-1zM365 167h1v1h-1zM366 178h1v1h-1zM369 285h1v1h-1zM378 274h1v1h-1zM378 284h1v1h-1zM380 161h1v1h-1zM380 167h1v1h-1zM383 274h1v2h-1zM384 274h1v1h-1zM386 269h1v1h-1zM396 243h1v1h-1zM396 257h1v1h-1zM398 277h1v1h-1zM399 273h1v1h-1zM399 277h1v1h-1zM399 281h1v1h-1zM404 263h1v1h-1zM405 261h1v1h-1zM407 274h1v1h-1zM408 274h1v1h-1zM411 265h1v1h-1zM413 266h1v1h-1zM413 278h1v1h-1zM416 257h1v1h-1zM419 266h1v1h-1zM425 291h1v1h-1zM426 282h1v1h-1zM428 287h1v1h-1zM429 278h1v1h-1zM431 288h1v1h-1zM431 290h1v1h-1zM434 294h1v1h-1z" fill="#e41ef4" fill-opacity="0.917"/><path d="M314 286h1v9h-1zM315 289h1v5h-1zM317 272h1v5h-1zM317 283h1v2h-1zM318 283h1v2h-1zM319 268h1v10h-1zM320 269h1v9h-1zM321 271h1v3h-1zM322 276h1v5h-1zM323 266h1v1h-1zM324 266h1v1h-1zM326 267h1v7h-1zM327 272h1v12h-1zM329 257h1v2h-1zM331 272h1v3h-1zM332 262h1v6h-1zM333 258h1v10h-1zM334 262h1v1h-1zM335 266h1v3h-1zM336 263h1v4h-1zM337 265h1v11h-1zM338 270h1v6h-1zM339 271h1v2h-1zM340 259h1v7h-1zM341 267h1v4h-1zM342 267h1v4h-1zM343 263h1v1h-1zM344 276h1v3h-1zM345 273h1v1h-1zM345 276h1v3h-1zM346 273h1v1h-1zM347 273h1v9h-1zM348 273h1v2h-1zM349 275h1v3h-1zM350 237h1v3h-1zM351 238h1v2h-1zM352 274h1v2h-1zM353 264h1v5h-1zM354 265h1v4h-1zM354 272h1v1h-1zM355 272h1v4h-1zM356 268h1v4h-1zM357 211h1v1h-1zM361 274h1v2h-1zM362 268h1v9h-1zM363 267h1v9h-1zM365 168h1v10h-1zM366 168h1v10h-1zM368 285h1v2h-1zM369 286h1v1h-1zM370 287h1v6h-1zM373 138h1v11h-1zM376 277h1v6h-1zM377 275h1v9h-1zM378 275h1v9h-1zM380 162h1v5h-1zM381 162h1v6h-1zM384 275h1v7h-1zM385 270h1v8h-1zM386 270h1v4h-1zM388 213h1v20h-1zM390 269h1v10h-1zM391 265h1v5h-1zM392 268h1v5h-1zM393 267h1v7h-1zM395 243h1v14h-1zM396 244h1v13h-1zM397 271h1v7h-1zM398 278h1v4h-1zM399 269h1v4h-1zM399 278h1v3h-1zM401 273h1v4h-1zM403 253h1v10h-1zM404 262h1v1h-1zM406 265h1v7h-1zM407 267h1v7h-1zM408 270h1v4h-1zM409 263h1v5h-1zM410 262h1v6h-1zM411 262h1v3h-1zM413 267h1v11h-1zM414 267h1v3h-1zM415 271h1v1h-1zM416 258h1v3h-1zM417 261h1v10h-1zM418 271h1v4h-1zM419 267h1v3h-1zM420 266h1v6h-1zM422 279h1v3h-1zM423 279h1v8h-1zM424 282h1v9h-1zM425 287h1v4h-1zM426 278h1v4h-1zM427 277h1v5h-1zM429 279h1v2h-1zM430 279h1v2h-1zM431 289h1v1h-1zM432 285h1v5h-1z" fill="#e41ef4" fill-opacity="1.000"/></svg>
<div class="t" style="left:2.00px;top:297.11px;font-size:10.5px;line-height:10.5px;color:#f2f2f2;font-weight:normal;transform:scaleX(0.9175);transform-origin:left 0;">Start 0 s</div>
<div class="t" style="left:183.90px;top:297.11px;font-size:10.5px;line-height:10.5px;color:#f2f2f2;font-weight:normal;transform:scaleX(0.9072);transform-origin:left 0;">Stop 2.448 ms</div>
<div class="t" style="left:250.00px;top:297.11px;font-size:10.5px;line-height:10.5px;color:#f2f2f2;font-weight:normal;transform:scaleX(0.9172);transform-origin:left 0;">Center 1 GHz</div>
<div class="t" style="left:415.80px;top:297.11px;font-size:10.5px;line-height:10.5px;color:#f2f2f2;font-weight:normal;transform:scaleX(0.9244);transform-origin:left 0;">Span 325.521 kHz</div>
<div class="t" style="left:2.00px;top:313.86px;font-size:10.8px;line-height:10.8px;color:#1bc2cc;font-weight:normal;transform:scaleX(0.9219);transform-origin:left 0;">Trc3 :&nbsp; Sym/Err</div>
<svg style="position:absolute;left:0;top:0" width="600" height="600"><rect x="2" y="328.9" width="493.5" height="180.6" fill="none" stroke="#8a8a8a" stroke-width="1.1"/></svg>
<div class="t" style="left:39.80px;top:359.01px;font-size:10.5px;line-height:10.5px;color:#1bc2cc;font-weight:normal;transform:scaleX(0.9263);transform-origin:left 0;-webkit-text-stroke:0.2px #1bc2cc;">Statistic</div>
<div class="t" style="left:179.30px;top:359.01px;font-size:10.5px;line-height:10.5px;color:#1bc2cc;font-weight:normal;transform:scaleX(0.8771);transform-origin:left 0;-webkit-text-stroke:0.2px #1bc2cc;">Current</div>
<div class="t" style="left:271.30px;top:359.01px;font-size:10.5px;line-height:10.5px;color:#1bc2cc;font-weight:normal;transform:scaleX(0.8833);transform-origin:left 0;-webkit-text-stroke:0.2px #1bc2cc;">MAX</div>
<div class="t" style="left:364.60px;top:359.01px;font-size:10.5px;line-height:10.5px;color:#1bc2cc;font-weight:normal;transform:scaleX(0.9050);transform-origin:left 0;-webkit-text-stroke:0.2px #1bc2cc;">MIN</div>
<div class="t" style="left:39.80px;top:382.11px;font-size:10.5px;line-height:10.5px;color:#1bc2cc;font-weight:normal;transform:scaleX(0.9106);transform-origin:left 0;-webkit-text-stroke:0.2px #1bc2cc;">Carr Power (dBm)</div>
<div class="t" style="left:179.30px;top:382.11px;font-size:10.5px;line-height:10.5px;color:#1bc2cc;font-weight:normal;transform:scaleX(0.9000);transform-origin:left 0;-webkit-text-stroke:0.2px #1bc2cc;">-11.384</div>
<div class="t" style="left:271.30px;top:382.11px;font-size:10.5px;line-height:10.5px;color:#1bc2cc;font-weight:normal;transform:scaleX(0.8914);transform-origin:left 0;-webkit-text-stroke:0.2px #1bc2cc;">-11.049</div>
<div class="t" style="left:364.60px;top:382.11px;font-size:10.5px;line-height:10.5px;color:#1bc2cc;font-weight:normal;transform:scaleX(0.9000);transform-origin:left 0;-webkit-text-stroke:0.2px #1bc2cc;">-73.193</div>
<div class="t" style="left:39.80px;top:406.21px;font-size:10.5px;line-height:10.5px;color:#1bc2cc;font-weight:normal;transform:scaleX(0.9294);transform-origin:left 0;-webkit-text-stroke:0.2px #1bc2cc;">Mod Rate (Hz)</div>
<div class="t" style="left:179.30px;top:406.21px;font-size:10.5px;line-height:10.5px;color:#1bc2cc;font-weight:normal;transform:scaleX(0.8902);transform-origin:left 0;-webkit-text-stroke:0.2px #1bc2cc;">10.001 k</div>
<div class="t" style="left:271.30px;top:406.21px;font-size:10.5px;line-height:10.5px;color:#1bc2cc;font-weight:normal;transform:scaleX(0.9024);transform-origin:left 0;-webkit-text-stroke:0.2px #1bc2cc;">144.20 k</div>
<div class="t" style="left:364.60px;top:406.21px;font-size:10.5px;line-height:10.5px;color:#1bc2cc;font-weight:normal;transform:scaleX(0.9250);transform-origin:left 0;-webkit-text-stroke:0.2px #1bc2cc;">203.45</div>
<div class="t" style="left:39.80px;top:429.91px;font-size:10.5px;line-height:10.5px;color:#1bc2cc;font-weight:normal;transform:scaleX(0.9318);transform-origin:left 0;-webkit-text-stroke:0.2px #1bc2cc;">AM Depth (%)</div>
<div class="t" style="left:179.30px;top:429.91px;font-size:10.5px;line-height:10.5px;color:#1bc2cc;font-weight:normal;transform:scaleX(0.9203);transform-origin:left 0;-webkit-text-stroke:0.2px #1bc2cc;">49.768</div>
<div class="t" style="left:271.30px;top:429.91px;font-size:10.5px;line-height:10.5px;color:#1bc2cc;font-weight:normal;transform:scaleX(0.9094);transform-origin:left 0;-webkit-text-stroke:0.2px #1bc2cc;">81.948</div>
<div class="t" style="left:364.60px;top:429.91px;font-size:10.5px;line-height:10.5px;color:#1bc2cc;font-weight:normal;transform:scaleX(0.9273);transform-origin:left 0;-webkit-text-stroke:0.2px #1bc2cc;">43.497 m</div>
<div class="t" style="left:39.80px;top:453.51px;font-size:10.5px;line-height:10.5px;color:#1bc2cc;font-weight:normal;transform:scaleX(0.9273);transform-origin:left 0;-webkit-text-stroke:0.2px #1bc2cc;">SINAD (dB)</div>
<div class="t" style="left:179.30px;top:453.51px;font-size:10.5px;line-height:10.5px;color:#1bc2cc;font-weight:normal;transform:scaleX(0.9203);transform-origin:left 0;-webkit-text-stroke:0.2px #1bc2cc;">85.163</div>
<div class="t" style="left:271.30px;top:453.51px;font-size:10.5px;line-height:10.5px;color:#1bc2cc;font-weight:normal;transform:scaleX(0.9094);transform-origin:left 0;-webkit-text-stroke:0.2px #1bc2cc;">103.59</div>
<div class="t" style="left:364.60px;top:453.51px;font-size:10.5px;line-height:10.5px;color:#1bc2cc;font-weight:normal;transform:scaleX(0.9000);transform-origin:left 0;-webkit-text-stroke:0.2px #1bc2cc;">-10.229</div>
<div class="t" style="left:39.80px;top:477.11px;font-size:10.5px;line-height:10.5px;color:#1bc2cc;font-weight:normal;transform:scaleX(0.9257);transform-origin:left 0;-webkit-text-stroke:0.2px #1bc2cc;">Carr Offset (Hz)</div>
<div class="t" style="left:179.30px;top:477.11px;font-size:10.5px;line-height:10.5px;color:#1bc2cc;font-weight:normal;transform:scaleX(0.9203);transform-origin:left 0;-webkit-text-stroke:0.2px #1bc2cc;">2.3315</div>
<div class="t" style="left:271.30px;top:477.11px;font-size:10.5px;line-height:10.5px;color:#1bc2cc;font-weight:normal;transform:scaleX(0.9024);transform-origin:left 0;-webkit-text-stroke:0.2px #1bc2cc;">71.027 k</div>
<div class="t" style="left:364.60px;top:477.11px;font-size:10.5px;line-height:10.5px;color:#1bc2cc;font-weight:normal;transform:scaleX(0.8800);transform-origin:left 0;-webkit-text-stroke:0.2px #1bc2cc;">-43.996 k</div>
<div style="position:absolute;left:498.5px;top:75.5px;width:101.5px;height:29.5px;background:linear-gradient(to right,#0b1d26 0%,#0c2636 4%,#0e2d48 10%,#10314f 22%,#0f2f4c 36%,#0e2a3e 52%,#0c2532 68%,#0b1f28 84%,#09171b 100%)"></div>
<div style="position:absolute;left:509.4px;top:84.9px;width:2.7px;height:2.3px;background:#1a80cc;border-radius:50%"></div>
<div style="position:absolute;left:509.4px;top:88.9px;width:2.7px;height:2.3px;background:#1a80cc;border-radius:50%"></div>
<div style="position:absolute;left:509.4px;top:92.9px;width:2.7px;height:2.3px;background:#1a80cc;border-radius:50%"></div>
<div class="t" style="left:537.00px;top:84.77px;font-size:11.25px;line-height:11.25px;color:#f2f2f2;font-weight:normal;transform:scaleX(0.9643);transform-origin:left 0;">Meas</div>
<div style="position:absolute;left:498.5px;top:106.0px;width:101.5px;height:51px;background:#132828"></div>
<div class="t" style="left:521.80px;top:118.97px;font-size:11.25px;line-height:11.25px;color:#f2f2f2;font-weight:normal;">Meas Type</div>
<div class="t" style="left:536.00px;top:144.88px;font-size:10.3px;line-height:10.3px;color:#f2f2f2;font-weight:normal;">AMA</div>
<svg style="position:absolute;left:589px;top:146.90px" width="8" height="7" viewBox="0 0 8 7"><path d="M0.3 0.5H7.3L3.8 5.6Z" fill="#8c8c8c"/></svg>
<div style="position:absolute;left:498.5px;top:158.52px;width:101.5px;height:51px;background:linear-gradient(to right,#0b1d26 0%,#0c2636 4%,#0e2d48 10%,#10314f 22%,#0f2f4c 36%,#0e2a3e 52%,#0c2532 68%,#0b1f28 84%,#09171b 100%)"></div>
<div class="t" style="left:517.80px;top:171.49px;font-size:11.25px;line-height:11.25px;color:#f2f2f2;font-weight:normal;transform:scaleX(0.9844);transform-origin:left 0;">Demod Type</div>
<div class="t" style="left:539.50px;top:197.40px;font-size:10.3px;line-height:10.3px;color:#f2f2f2;font-weight:normal;">AM</div>
<svg style="position:absolute;left:589px;top:199.42px" width="8" height="7" viewBox="0 0 8 7"><path d="M0.3 0.5H7.3L3.8 5.6Z" fill="#8c8c8c"/></svg>
<div style="position:absolute;left:498.5px;top:211.04000000000002px;width:101.5px;height:51px;background:linear-gradient(to right,#0b1d26 0%,#0c2636 4%,#0e2d48 10%,#10314f 22%,#0f2f4c 36%,#0e2a3e 52%,#0c2532 68%,#0b1f28 84%,#09171b 100%)"></div>
<div class="t" style="left:534.45px;top:224.01px;font-size:11.25px;line-height:11.25px;color:#f2f2f2;font-weight:normal;transform:scaleX(0.9281);transform-origin:left 0;">IF BW</div>
<div class="t" style="left:531.80px;top:249.92px;font-size:10.3px;line-height:10.3px;color:#f2f2f2;font-weight:normal;transform:scaleX(0.9211);transform-origin:left 0;">120 kHz</div>
<div style="position:absolute;left:498.5px;top:263.56px;width:101.5px;height:51px;background:linear-gradient(to right,#0b1d26 0%,#0c2636 4%,#0e2d48 10%,#10314f 22%,#0f2f4c 36%,#0e2a3e 52%,#0c2532 68%,#0b1f28 84%,#09171b 100%)"></div>
<div class="t" style="left:532.90px;top:276.53px;font-size:11.25px;line-height:11.25px;color:#f2f2f2;font-weight:normal;transform:scaleX(0.9371);transform-origin:left 0;">EqLPF</div>
<div class="t" style="left:527.65px;top:302.44px;font-size:10.3px;line-height:10.3px;color:#f2f2f2;font-weight:normal;transform:scaleX(0.9675);transform-origin:left 0;">IFBW / 6</div>
<svg style="position:absolute;left:589px;top:304.46px" width="8" height="7" viewBox="0 0 8 7"><path d="M0.3 0.5H7.3L3.8 5.6Z" fill="#8c8c8c"/></svg>
<div style="position:absolute;left:498.5px;top:316.08000000000004px;width:101.5px;height:51px;background:linear-gradient(to right,#0b1d26 0%,#0c2636 4%,#0e2d48 10%,#10314f 22%,#0f2f4c 36%,#0e2a3e 52%,#0c2532 68%,#0b1f28 84%,#09171b 100%)"></div>
<div class="t" style="left:518.70px;top:329.05px;font-size:11.25px;line-height:11.25px;color:#f2f2f2;font-weight:normal;transform:scaleX(0.9714);transform-origin:left 0;">Avg Number</div>
<div class="t" style="left:544.40px;top:354.96px;font-size:10.3px;line-height:10.3px;color:#f2f2f2;font-weight:normal;transform:scaleX(0.8167);transform-origin:left 0;">10</div>
<div style="position:absolute;left:498.5px;top:368.6px;width:101.5px;height:51px;background:linear-gradient(to right,#0b1d26 0%,#0c2636 4%,#0e2d48 10%,#10314f 22%,#0f2f4c 36%,#0e2a3e 52%,#0c2532 68%,#0b1f28 84%,#09171b 100%)"></div>
<div class="t" style="left:539.50px;top:381.57px;font-size:11.25px;line-height:11.25px;color:#f2f2f2;font-weight:normal;transform:scaleX(1.0316);transform-origin:left 0;">Avg</div>
<div class="t" style="left:532.95px;top:407.48px;font-size:10.3px;line-height:10.3px;color:#f2f2f2;font-weight:normal;transform:scaleX(0.9909);transform-origin:left 0;"><span style="color:#8c8c8c">On</span>&nbsp; <span style="text-decoration:underline">Off</span></div>
</body></html>
